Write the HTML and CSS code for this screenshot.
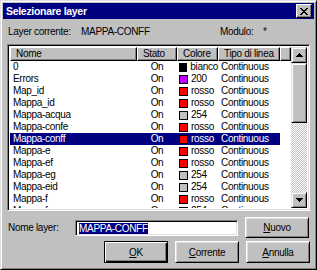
FILE: index.html
```html
<!DOCTYPE html>
<html lang="it">
<head>
    <meta charset="UTF-8">
    <title>Selezionare layer</title>
    <link rel="stylesheet" href="styles.css">
</head>
<body>
    <div class="window">
        <div class="titlebar">
            <span class="title">Selezionare layer</span>
            <button class="close" aria-label="Chiudi">
                <svg width="8" height="7" viewBox="0 0 8 7"><path d="M0 0h2v1h-2zM6 0h2v1h-2zM1 1h2v1h-2zM5 1h2v1h-2zM2 2h4v1h-4zM3 3h2v1h-2zM2 4h4v1h-4zM1 5h2v1h-2zM5 5h2v1h-2zM0 6h2v1h-2zM6 6h2v1h-2z" fill="#000"/></svg>
            </button>
        </div>

        <div class="content">
            <div class="info">
                <span>Layer corrente:</span>
                <span>MAPPA-CONFF</span>
                <span>Modulo:</span>
                <span>*</span>
            </div>

            <div class="listbox">
                <div class="list-main">
                    <div class="list-head">
                        <div class="hcell">Nome</div>
                        <div class="hcell">Stato</div>
                        <div class="hcell">Colore</div>
                        <div class="hcell">Tipo di linea</div>
                        <div class="hcell"></div>
                    </div>
                    <div class="rows">
                        <div class="row"><span class="c-name">0</span><span class="c-stato">On</span><span class="c-col"><i class="sw sw-black"></i>bianco</span><span class="c-tipo">Continuous</span></div>
                        <div class="row"><span class="c-name">Errors</span><span class="c-stato">On</span><span class="c-col"><i class="sw sw-violet"></i>200</span><span class="c-tipo">Continuous</span></div>
                        <div class="row"><span class="c-name">Map_id</span><span class="c-stato">On</span><span class="c-col"><i class="sw sw-red"></i>rosso</span><span class="c-tipo">Continuous</span></div>
                        <div class="row"><span class="c-name">Mappa_id</span><span class="c-stato">On</span><span class="c-col"><i class="sw sw-red"></i>rosso</span><span class="c-tipo">Continuous</span></div>
                        <div class="row"><span class="c-name">Mappa-acqua</span><span class="c-stato">On</span><span class="c-col"><i class="sw sw-gray"></i>254</span><span class="c-tipo">Continuous</span></div>
                        <div class="row"><span class="c-name">Mappa-confe</span><span class="c-stato">On</span><span class="c-col"><i class="sw sw-red"></i>rosso</span><span class="c-tipo">Continuous</span></div>
                        <div class="row selected"><span class="c-name">Mappa-conff</span><span class="c-stato">On</span><span class="c-col"><i class="sw sw-red"></i>rosso</span><span class="c-tipo">Continuous</span></div>
                        <div class="row"><span class="c-name">Mappa-e</span><span class="c-stato">On</span><span class="c-col"><i class="sw sw-red"></i>rosso</span><span class="c-tipo">Continuous</span></div>
                        <div class="row"><span class="c-name">Mappa-ef</span><span class="c-stato">On</span><span class="c-col"><i class="sw sw-red"></i>rosso</span><span class="c-tipo">Continuous</span></div>
                        <div class="row"><span class="c-name">Mappa-eg</span><span class="c-stato">On</span><span class="c-col"><i class="sw sw-gray"></i>254</span><span class="c-tipo">Continuous</span></div>
                        <div class="row"><span class="c-name">Mappa-eid</span><span class="c-stato">On</span><span class="c-col"><i class="sw sw-gray"></i>254</span><span class="c-tipo">Continuous</span></div>
                        <div class="row"><span class="c-name">Mappa-f</span><span class="c-stato">On</span><span class="c-col"><i class="sw sw-red"></i>rosso</span><span class="c-tipo">Continuous</span></div>
                        <div class="row"><span class="c-name">Mappa-fe</span><span class="c-stato">On</span><span class="c-col"><i class="sw sw-gray"></i>254</span><span class="c-tipo">Continuous</span></div>
                    </div>
                </div>
                <div class="scrollbar">
                    <div class="sb-btn">
                        <svg width="7" height="4" viewBox="0 0 7 4"><path d="M3 0h1v1h-1zM2 1h3v1h-3zM1 2h5v1h-5zM0 3h7v1h-7z" fill="#000"/></svg>
                    </div>
                    <div class="sb-thumb"></div>
                    <div class="sb-track"></div>
                    <div class="sb-btn">
                        <svg width="7" height="4" viewBox="0 0 7 4"><path d="M0 0h7v1h-7zM1 1h5v1h-5zM2 2h3v1h-3zM3 3h1v1h-1z" fill="#000"/></svg>
                    </div>
                </div>
            </div>

            <div class="name-row">
                <label class="name-label">Nome layer:</label>
                <div class="field"><span class="sel-text">MAPPA-CONFF</span></div>
                <button class="btn"><u>N</u>uovo</button>
            </div>

            <div class="buttons">
                <button class="btn default"><u>O</u>K</button>
                <button class="btn"><u>C</u>orrente</button>
                <button class="btn"><u>A</u>nnulla</button>
            </div>
        </div>
    </div>
</body>
</html>
```

FILE: styles.css
```css
/* Finestra di dialogo stile Win95 */
body {
    margin: 0;
    padding: 0;
    background-color: #c0c0c0;
    font-family: "Liberation Sans", Arial, sans-serif;
    font-size: 10px;
    letter-spacing: -0.3px;
    color: #000000;
}
.window {
    width: 317px;
    height: 270px;
    box-sizing: border-box;
    background-color: #c0c0c0;
    border: 1px solid;
    border-color: #dfdfdf #000000 #000000 #dfdfdf;
    box-shadow: inset 1px 1px #ffffff, inset -1px -1px #808080;
    padding: 2px;
    display: flex;
    flex-direction: column;
}
.titlebar {
    height: 16px;
    background-color: #000080;
    display: flex;
    align-items: center;
    justify-content: space-between;
    padding: 0 2px 0 3px;
}
.title {
    color: #ffffff;
    font-weight: bold;
    font-size: 10.5px;
}
.close {
    width: 16px;
    height: 14px;
    padding: 0;
    background-color: #c0c0c0;
    border: 1px solid;
    border-color: #ffffff #000000 #000000 #ffffff;
    box-shadow: inset -1px -1px #808080;
    display: flex;
    align-items: center;
    justify-content: center;
}
.content {
    padding: 0 4px 0 4px;
    display: flex;
    flex-direction: column;
}
.info {
    display: grid;
    grid-template-columns: 73px 139px 43px auto;
    margin-top: 7px;
    padding-left: 1px;
    height: 12px;
    line-height: 12px;
}
.listbox {
    margin-top: 6px;
    height: 167px;
    box-sizing: border-box;
    border: 1px solid;
    border-color: #808080 #ffffff #ffffff #808080;
    box-shadow: inset 1px 1px #000000, inset -1px -1px #dfdfdf;
    padding: 2px 2px 2px 2px;
    background-color: #ffffff;
    display: flex;
    overflow: hidden;
}
.list-main {
    flex: 1;
    overflow: hidden;
}
.list-head {
    display: grid;
    grid-template-columns: 127px 40px 41px 62px 1fr;
    height: 14px;
}
.hcell {
    background-color: #c0c0c0;
    border: 1px solid;
    border-color: #ffffff #000000 #000000 #ffffff;
    box-shadow: inset -1px -1px #808080;
    padding-left: 5px;
    line-height: 12px;
    overflow: hidden;
    white-space: nowrap;
}
.row {
    display: grid;
    grid-template-columns: 127px 40px 41px 62px;
    width: 270px;
    height: 12px;
    line-height: 12px;
    white-space: nowrap;
}
.row.selected {
    background-color: #000080;
    color: #ffffff;
}
.c-name {
    padding-left: 3px;
}
.c-stato {
    text-align: center;
}
.c-col {
    display: flex;
    align-items: center;
    padding-left: 2px;
}
.c-tipo {
    padding-left: 3px;
}
.sw {
    width: 7px;
    height: 7px;
    border: 1px solid #000000;
    margin-right: 3px;
}
.sw-black { background-color: #000000; }
.sw-violet { background-color: #c000ff; }
.sw-red { background-color: #ff0000; }
.sw-gray { background-color: #c0c0c0; }
.scrollbar {
    width: 16px;
    display: flex;
    flex-direction: column;
}
.sb-btn, .sb-thumb {
    box-sizing: border-box;
    background-color: #c0c0c0;
    border: 1px solid;
    border-color: #dfdfdf #000000 #000000 #dfdfdf;
    box-shadow: inset 1px 1px #ffffff, inset -1px -1px #808080;
}
.sb-btn {
    height: 16px;
    display: flex;
    align-items: center;
    justify-content: center;
}
.sb-thumb {
    height: 60px;
}
.sb-track {
    flex: 1;
    background: repeating-conic-gradient(#c0c0c0 0 25%, #ffffff 0 50%) 0 0 / 2px 2px;
}
.name-row {
    display: flex;
    align-items: center;
    margin-top: 6px;
    height: 21px;
}
.name-label {
    width: 67px;
    padding-left: 1px;
}
.field {
    width: 163px;
    height: 16px;
    box-sizing: border-box;
    border: 1px solid;
    border-color: #808080 #ffffff #ffffff #808080;
    box-shadow: inset 1px 1px #000000, inset -1px -1px #dfdfdf;
    background-color: #ffffff;
    padding: 2px 0 0 3px;
    line-height: 11px;
}
.sel-text {
    background-color: #000080;
    color: #ffffff;
}
.btn {
    width: 64px;
    height: 21px;
    box-sizing: border-box;
    font: inherit;
    letter-spacing: inherit;
    color: #000000;
    background-color: #c0c0c0;
    border: 1px solid;
    border-color: #ffffff #000000 #000000 #ffffff;
    box-shadow: inset 1px 1px #dfdfdf, inset -1px -1px #808080;
    padding: 0;
}
.name-row .btn {
    margin-left: 7px;
}
.buttons {
    display: flex;
    justify-content: flex-end;
    gap: 7px;
    margin-top: 3px;
    padding-right: 0;
}
.buttons .btn {
    height: 22px;
}
.btn.default {
    border-color: #000000;
    box-shadow: inset 1px 1px #ffffff, inset -1px -1px #000000, inset -2px -2px #808080;
}
```
